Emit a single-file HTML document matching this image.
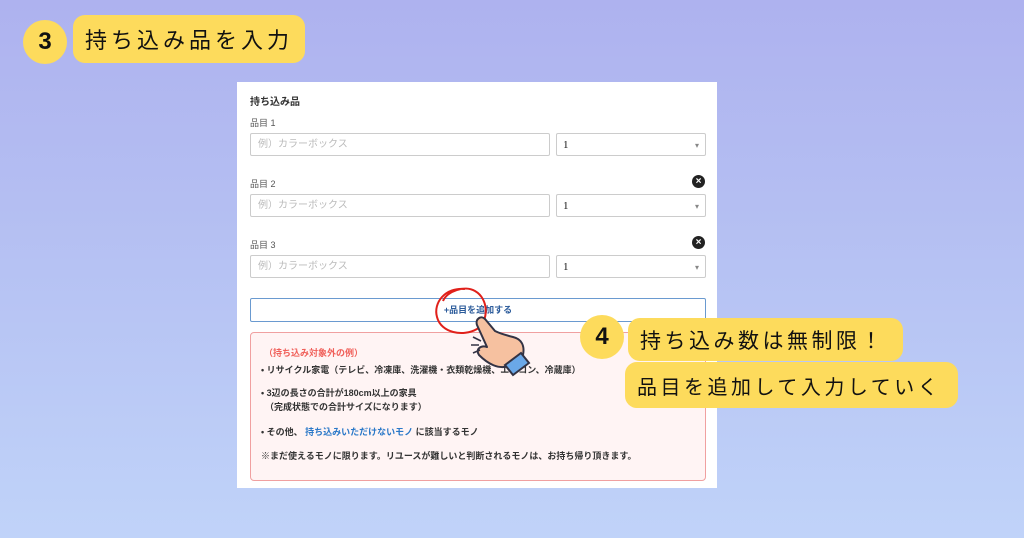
<!DOCTYPE html>
<html><head><meta charset="utf-8"><style>
*{margin:0;padding:0;box-sizing:border-box}
body{width:1024px;height:538px;overflow:hidden;position:relative;background:linear-gradient(180deg,#aeb2ef 0%,#b6c2f3 50%,#c0d3f9 100%);font-family:"Liberation Sans","Noto Sans CJK JP",sans-serif}
.abs{position:absolute}
.circ{position:absolute;border-radius:50%;background:#fddb5c;display:flex;align-items:center;justify-content:center;font-weight:bold;font-size:24px;color:#111}
.lab{position:absolute;background:#fddb5c;border-radius:12px;font-family:"WenQuanYi Zen Hei","Noto Sans CJK JP",sans-serif;color:#111;font-size:22px;letter-spacing:4px;display:flex;align-items:center;padding-left:12px;white-space:nowrap}
.card{left:237px;top:82px;width:480px;height:406px;background:#fff}
.t{position:absolute;font-size:10px;color:#333}
.inp{position:absolute;border:1px solid #ccc;border-radius:2px;height:23px;font-size:10px;color:#bbb;padding:0 7px;line-height:21px}
.sel{position:absolute;border:1px solid #ccc;border-radius:2px;height:23px;font-family:"Liberation Serif",serif;font-size:11px;color:#111;padding:0 6px;line-height:23px}
.sel:after{content:"▾";position:absolute;right:6px;top:0;font-size:8px;color:#888}
.x{position:absolute;width:13px;height:13px;border-radius:50%;background:#222;color:#fff;font-size:10px;font-weight:bold;text-align:center;line-height:13px}
.pk{position:absolute;font-size:9px;color:#333;white-space:nowrap}
</style></head><body>
<div class="circ" style="left:23px;top:20px;width:44px;height:44px">3</div>
<div class="lab" style="left:73px;top:15px;width:232px;height:48px">持ち込み品を入力</div>

<div class="abs card">
<div class="t" style="left:13px;top:11px;font-weight:bold;font-size:10px">持ち込み品</div>
<div class="t" style="left:13px;top:34px;color:#555;font-size:9px">品目 1</div>
<div class="inp" style="left:13px;top:51px;width:300px">例）カラーボックス</div>
<div class="sel" style="left:319px;top:51px;width:150px">1</div>

<div class="t" style="left:13px;top:95px;color:#555;font-size:9px">品目 2</div>
<div class="x" style="left:455px;top:93px">×</div>
<div class="inp" style="left:13px;top:112px;width:300px">例）カラーボックス</div>
<div class="sel" style="left:319px;top:112px;width:150px">1</div>

<div class="t" style="left:13px;top:156px;color:#555;font-size:9px">品目 3</div>
<div class="x" style="left:455px;top:154px">×</div>
<div class="inp" style="left:13px;top:173px;width:300px">例）カラーボックス</div>
<div class="sel" style="left:319px;top:173px;width:150px">1</div>

<div class="abs" style="left:13px;top:216px;width:456px;height:24px;border:1px solid #6a9ad0;border-radius:2px;text-align:center;font-size:9px;font-weight:bold;color:#2a5a9a;line-height:22px">+品目を追加する</div>

<div class="abs" style="left:13px;top:250px;width:456px;height:149px;border:1px solid #f0a0a0;border-radius:4px;background:#fff4f4">
<div class="pk" style="left:13px;top:13px;color:#f0605a;font-weight:bold">（持ち込み対象外の例）</div>
<div class="pk" style="left:10px;top:30px;font-weight:bold">• リサイクル家電（テレビ、冷凍庫、洗濯機・衣類乾燥機、エアコン、冷蔵庫）</div>
<div class="pk" style="left:10px;top:53px;font-weight:bold">• 3辺の長さの合計が180cm以上の家具</div>
<div class="pk" style="left:14px;top:67px;font-weight:bold">（完成状態での合計サイズになります）</div>
<div class="pk" style="left:10px;top:92px;font-weight:bold">• その他、 <span style="color:#2a78c8">持ち込みいただけないモノ</span> に該当するモノ</div>
<div class="pk" style="left:10px;top:116px;font-weight:bold">※まだ使えるモノに限ります。リユースが難しいと判断されるモノは、お持ち帰り頂きます。</div>
</div>
</div>

<svg class="abs" style="left:425px;top:285px" width="120" height="95" viewBox="0 0 120 95">
<path d="M40 4 C20 2 8 18 12 32 C16 48 38 52 52 44 C64 36 64 14 50 6 C40 0 22 6 18 16" fill="none" stroke="#e0201a" stroke-width="2"/>
<path d="M60 34 C56 30 50 34 52 40 L62 62 C56 60 50 64 54 70 C62 78 74 86 86 80 L98 70 C100 60 96 54 88 52 C80 50 74 48 70 46 Z" fill="#f6c1a0" stroke="#334" stroke-width="2" stroke-linejoin="round"/>
<path d="M80 80 L96 68 L104 78 L88 90 Z" fill="#6aa8e8" stroke="#334" stroke-width="2"/>
<path d="M48 52 L56 56 M46 60 L54 60 M48 68 L55 65" stroke="#334" stroke-width="1.6"/>
</svg>

<div class="circ" style="left:580px;top:315px;width:44px;height:44px">4</div>
<div class="lab" style="left:628px;top:318px;width:275px;height:43px;font-size:21px;letter-spacing:3.5px">持ち込み数は無制限！</div>
<div class="lab" style="left:625px;top:362px;width:333px;height:46px;font-size:20px;letter-spacing:3.5px">品目を追加して入力していく</div>
</body></html>
